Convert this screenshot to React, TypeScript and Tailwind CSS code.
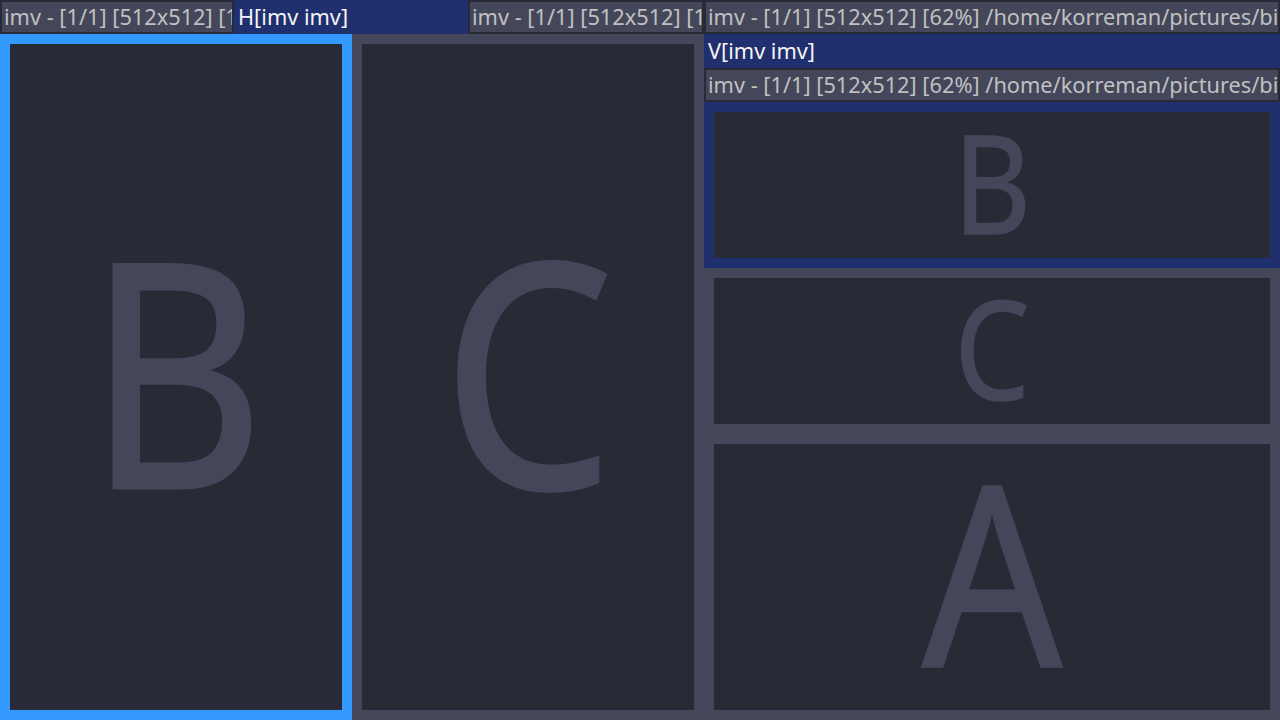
import type { ReactNode } from 'react';

const font = "font-['Noto_Sans',sans-serif]";

interface TabProps {
    label: string;
    active?: boolean;
    className?: string;
}

// title bar of a tab / stacked container
function Tab({ label, active, className }: TabProps) {
    return (
        <div
            className={
                (active
                    ? 'bg-[#202f6e] border-[#202f6e] text-[#f4f4f4] '
                    : 'bg-[#44475a] border-[#282a36] text-[#c0c0c0] ') +
                'h-[34px] shrink-0 border-2 pl-[2px] flex items-center overflow-hidden whitespace-nowrap text-[21.75px] leading-none ' +
                (className ?? '')
            }
        >
            {label}
        </div>
    );
}

interface WindowProps {
    letter: string;
    border: string;
    className?: string;
}

// image shown by imv: 512x512, scaled to fit
function Picture({ letter }: { letter: string }) {
    return (
        <svg viewBox="0 0 512 512" preserveAspectRatio="xMidYMid meet" className="block w-full h-full">
            <g transform="translate(256 0) scale(0.87 1)">
                <text
                    x="0"
                    y="427"
                    textAnchor="middle"
                    fontSize="482"
                    fill="#44475a"
                    stroke="#44475a"
                    strokeWidth="5"
                    fontFamily="'Noto Sans', sans-serif"
                >
                    {letter}
                </text>
            </g>
        </svg>
    );
}

function Window({ letter, border, className }: WindowProps) {
    return (
        <div className={'border-[10px] bg-[#282a36] flex ' + border + ' ' + (className ?? '')}>
            <div className="flex-1 min-w-0 min-h-0">
                <Picture letter={letter} />
            </div>
        </div>
    );
}

function Column({ children, className }: { children: ReactNode; className?: string }) {
    return <div className={'flex flex-col ' + (className ?? '')}>{children}</div>;
}

const long = 'imv - [1/1] [512x512] [62%] /home/korreman/pictures/big_letters/b.png';
const short = 'imv - [1/1] [512x512] [13%] /home/korreman/pictures/big_letters/b.png';

export default function App() {
    return (
        <div className={'w-[1280px] h-[720px] bg-[#282a36] flex flex-col overflow-hidden ' + font}>
            <div className="flex h-[34px]">
                <Tab label={short} className="w-[234px]" />
                <Tab label="H[imv imv]" active className="w-[234px]" />
                <Tab label={short} className="w-[236px]" />
                <Tab label={long} className="w-[576px]" />
            </div>

            <div className="flex flex-1 min-h-0">
                <Window letter="B" border="border-[#3399ff]" className="w-[352px]" />
                <Window letter="C" border="border-[#44475a]" className="w-[352px]" />

                <Column className="w-[576px]">
                    <Tab label="V[imv imv]" active />
                    <Tab label={long} />
                    <Window letter="B" border="border-[#202f6e]" className="h-[166px]" />
                    <Window letter="C" border="border-[#44475a]" className="h-[166px]" />
                    <Window letter="A" border="border-[#44475a]" className="flex-1 min-h-0" />
                </Column>
            </div>
        </div>
    );
}
